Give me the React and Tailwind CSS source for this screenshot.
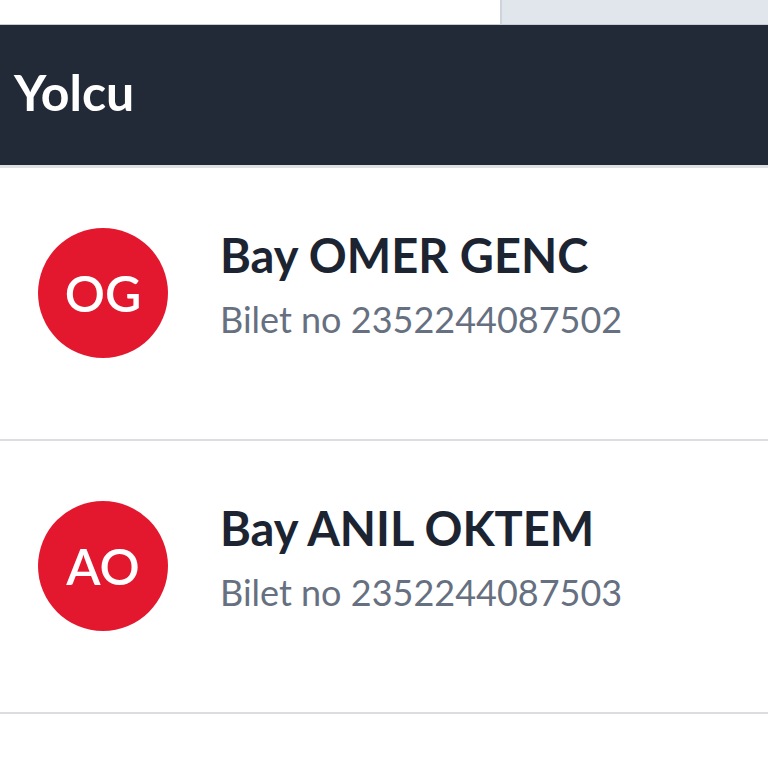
import React from "react";

const passengers = [
  { initials: "OG", name: "Bay OMER GENC", ticket: "2352244087502" },
  { initials: "AO", name: "Bay ANIL OKTEM", ticket: "2352244087503" },
];

export default function App() {
  return (
    <div className="w-[768px] h-[768px] overflow-hidden bg-white" style={{ fontFamily: "Lato, 'Noto Sans', sans-serif" }}>
      <div className="flex h-[25px]">
        <div className="w-[500px] bg-white border-b border-[#c9ccd2]" />
        <div className="flex-1 bg-[#e1e5ec] border-l-2 border-[#d0d4da] border-b border-b-[#c9ccd2]" />
      </div>
      <div className="h-[143px] bg-[#232a37] flex items-center pl-[14px] border-b-[3px] border-[#dde0e5]">
        <span className="text-white text-[50px] font-bold leading-none mb-[6px]">Yolcu</span>
      </div>
      {passengers.map((p) => (
        <div key={p.ticket} className="h-[273px] flex items-center border-b-2 border-[#dcdde0] pl-[38px] pb-[22px]">
          <div className="w-[130px] h-[130px] rounded-full bg-[#e3182f] flex items-center justify-center shrink-0">
            <span className="text-white text-[50px] font-semibold leading-none">{p.initials}</span>
          </div>
          <div className="ml-[52px] flex flex-col mb-[17px]">
            <span className="text-[#1c2432] text-[47px] font-bold leading-[56px]">{p.name}</span>
            <span className="text-[#667080] text-[36px] leading-[46px] mt-[13px]">Bilet no {p.ticket}</span>
          </div>
        </div>
      ))}
    </div>
  );
}
